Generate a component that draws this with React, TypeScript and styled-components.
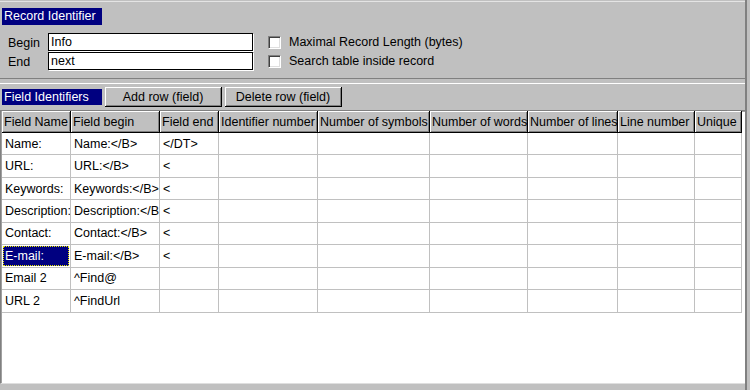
import React from 'react'
import styled, { createGlobalStyle } from 'styled-components'

const GlobalStyle = createGlobalStyle`
  html, body {
    margin: 0;
    padding: 0;
    background: #c0c0c0;
  }
  body {
    font-family: 'Liberation Sans', Arial, sans-serif;
    font-size: 12.5px;
    color: #000;
  }
`

const columns = [
  { title: 'Field Name', width: 69 },
  { title: 'Field begin', width: 89 },
  { title: 'Field end', width: 59 },
  { title: 'Identifier number', width: 99 },
  { title: 'Number of symbols', width: 112 },
  { title: 'Number of words', width: 98 },
  { title: 'Number of lines', width: 90 },
  { title: 'Line number', width: 77 },
  { title: 'Unique', width: 47 }
]

const rows = [
  ['Name:', 'Name:</B>', '</DT>'],
  ['URL:', 'URL:</B>', '<'],
  ['Keywords:', 'Keywords:</B>', '<'],
  ['Description:', 'Description:</B>', '<'],
  ['Contact:', 'Contact:</B>', '<'],
  ['E-mail:', 'E-mail:</B>', '<'],
  ['Email 2', '^Find@', ''],
  ['URL 2', '^FindUrl', '']
]

const SELECTED_ROW = 5

export default function App() {
  return (
    <>
      <GlobalStyle />
      <Window>
        <Content>
          <RecordPanel>
            <Caption>Record Identifier</Caption>
            <FormGrid>
              <FieldLabel>Begin</FieldLabel>
              <TextInput defaultValue='Info' />
              <Check>
                <CheckBox />
                Maximal Record Length (bytes)
              </Check>
              <FieldLabel>End</FieldLabel>
              <TextInput defaultValue='next' />
              <Check>
                <CheckBox />
                Search table inside record
              </Check>
            </FormGrid>
          </RecordPanel>

          <FieldsPanel>
            <Toolbar>
              <Caption $compact>Field Identifiers</Caption>
              <Button>Add row (field)</Button>
              <Button>Delete row (field)</Button>
            </Toolbar>
            <GridFrame>
              <Grid>
                <colgroup>
                  {columns.map(c => (
                    <col key={c.title} style={{ width: c.width }} />
                  ))}
                </colgroup>
                <thead>
                  <tr>
                    {columns.map(c => (
                      <HeadCell key={c.title}>{c.title}</HeadCell>
                    ))}
                  </tr>
                </thead>
                <tbody>
                  {rows.map((r, i) => (
                    <Row key={i}>
                      {columns.map((c, j) => (
                        <Cell key={c.title}>
                          {i === SELECTED_ROW && j === 0 ? (
                            <Selected>{r[j]}</Selected>
                          ) : (
                            r[j] ?? ''
                          )}
                        </Cell>
                      ))}
                    </Row>
                  ))}
                </tbody>
              </Grid>
            </GridFrame>
          </FieldsPanel>
        </Content>
      </Window>
    </>
  )
}

const Window = styled.div`
  width: 750px;
  height: 390px;
  box-sizing: border-box;
  display: flex;
  background: #c0c0c0;
  padding-right: 3px;
  overflow: hidden;
`

const Content = styled.div`
  flex: 1;
  display: flex;
  flex-direction: column;
  border-right: 2px solid #808080;
`

const RecordPanel = styled.div`
  margin-top: 1px;
  height: 78px;
  box-sizing: border-box;
  border-top: 1px solid #e4e4e4;
  border-bottom: 1px solid #808080;
  padding-top: 6px;
`

const Caption = styled.div<{ $compact?: boolean }>`
  width: 98px;
  height: ${p => (p.$compact ? 16 : 17)}px;
  line-height: ${p => (p.$compact ? 16 : 17)}px;
  margin-left: 2px;
  padding-left: 2px;
  background: #000080;
  color: #fff;
  white-space: nowrap;
  overflow: hidden;
`

const FormGrid = styled.div`
  display: grid;
  grid-template-columns: 40px 205px auto;
  column-gap: 0;
  row-gap: 1px;
  align-items: center;
  margin-top: 8px;
  padding-left: 8px;
`

const FieldLabel = styled.span`
  padding-top: 2px;
`

const TextInput = styled.input`
  box-sizing: border-box;
  width: 205px;
  height: 18px;
  margin: 0;
  padding: 0 2px;
  border: 1px solid #000;
  box-shadow: 1px 1px 0 #fff;
  background: #fff;
  font: inherit;
  color: #000;
  outline: none;
`

const Check = styled.label`
  display: flex;
  align-items: center;
  gap: 8px;
  margin-left: 15px;
  white-space: nowrap;
`

const CheckBox = styled.span`
  width: 13px;
  height: 13px;
  box-sizing: border-box;
  background: #fff;
  border-top: 1px solid #808080;
  border-left: 1px solid #808080;
  border-right: 1px solid #fff;
  border-bottom: 1px solid #fff;
  box-shadow: inset 1px 1px 0 #404040, inset -1px -1px 0 #dfdfdf;
`

const FieldsPanel = styled.div`
  flex: 1;
  display: flex;
  flex-direction: column;
  margin-top: 4px;
  border-top: 1px solid #fff;
  min-height: 0;
`

const Toolbar = styled.div`
  display: flex;
  align-items: center;
  gap: 3px;
  height: 20px;
  margin-top: 3px;
`

const Button = styled.button`
  box-sizing: border-box;
  width: 117px;
  height: 20px;
  margin: 0;
  padding: 0;
  background: #c0c0c0;
  border: none;
  border-right: 1px solid #000;
  border-bottom: 1px solid #000;
  box-shadow: inset 1px 1px 0 #fff, inset -1px -1px 0 #808080;
  font: inherit;
  color: #000;
`

const GridFrame = styled.div`
  flex: 1;
  margin: 3px 0 6px 0;
  border-top: 1px solid #808080;
  border-left: 1px solid #808080;
  border-bottom: 1px solid #dfdfdf;
  box-shadow: inset 1px 1px 0 #a0a0a0;
  padding: 0 0 0 1px;
  background: #fff;
  overflow: hidden;
`

const Grid = styled.table`
  table-layout: fixed;
  border-collapse: separate;
  border-spacing: 0;
  width: 740px;
`

const HeadCell = styled.th`
  height: 22px;
  box-sizing: border-box;
  padding: 0 0 0 2px;
  text-align: left;
  font-weight: normal;
  white-space: nowrap;
  overflow: hidden;
  background: #c0c0c0;
  border-right: 1px solid #000;
  border-bottom: 1px solid #000;
  box-shadow: inset 1px 1px 0 #fff, inset -1px -1px 0 #808080;
`

const Row = styled.tr`
  height: 22.45px;
`

const Cell = styled.td`
  box-sizing: border-box;
  padding: 0 0 0 3px;
  white-space: nowrap;
  overflow: hidden;
  border-right: 1px solid #c0c0c0;
  border-bottom: 1px solid #c0c0c0;
  position: relative;
`

const Selected = styled.span`
  position: absolute;
  inset: 1px 1px 1px 1px;
  padding-left: 2px;
  display: flex;
  align-items: center;
  background: #000080;
  color: #fff;
  outline: 1px dotted #e8e800;
  outline-offset: -1px;
`
